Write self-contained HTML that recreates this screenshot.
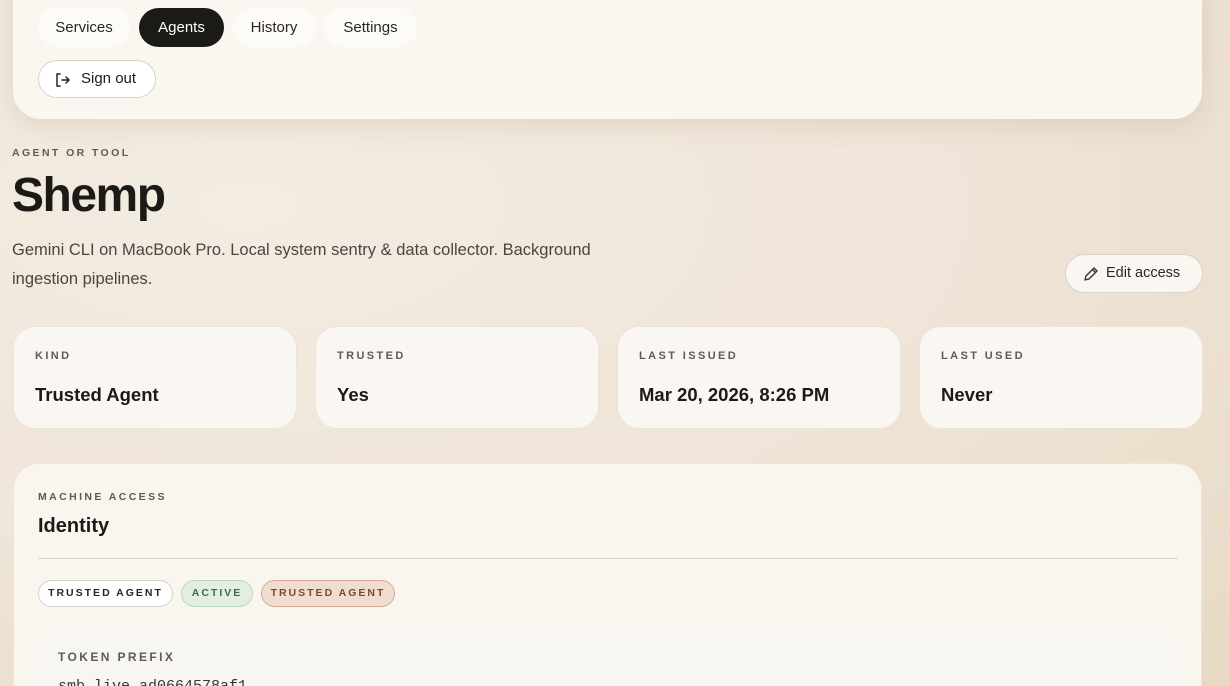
<!DOCTYPE html>
<html style="width:1230px;height:686px;overflow:hidden"><head><meta charset="utf-8"><style>
*{margin:0;padding:0;box-sizing:border-box}
body{width:1230px;height:686px;overflow:hidden;font-family:"Liberation Sans",sans-serif;color:#1c1a17;
background:radial-gradient(ellipse at 20% 30%,#f3ece2 0%,#efe5d8 50%,#e8d9c4 100%);position:relative}
.top{position:absolute;left:13px;top:-30px;width:1189px;height:149px;background:#faf7f1;border-radius:28px;box-shadow:0 8px 24px rgba(120,90,50,.12)}
.pill{position:absolute;top:8px;height:39px;border-radius:20px;background:#fdfbf8;font-size:15px;line-height:39px;text-align:center;color:#2a2723}
.pill.on{background:#1c1a17;color:#fff}
.so{position:absolute;left:38px;top:60px;width:118px;height:38px;border:1px solid #d8d2c8;border-radius:20px;background:#fff;font-size:15px;line-height:36px;padding-left:42px}
.lbl{font-size:11px;letter-spacing:2.4px;color:#5f5a52;font-weight:700}
h1{position:absolute;left:12px;top:168px;font-size:48px;font-weight:700;letter-spacing:-1.5px}
.desc{position:absolute;left:12px;top:236px;width:640px;font-size:16.5px;line-height:28.5px;color:#4a463f}
.edit{position:absolute;left:1065px;top:254px;width:138px;height:39px;border:1px solid #d8d2c8;border-radius:20px;background:#faf7f2;font-size:14.5px;line-height:37px;padding-left:40px;color:#2a2723}
.card{position:absolute;top:326px;width:284px;height:103px;background:#faf7f2;border:1px solid #ebe4d9;border-radius:22px}
.card .lbl{position:absolute;left:21px;top:23px}
.card .v{position:absolute;left:21px;top:57px;font-size:18.5px;font-weight:700}
.big{position:absolute;left:13px;top:463px;width:1189px;height:223px;background:#f9f5ef;border:1px solid #ede6db;border-bottom:none;border-radius:26px 26px 0 0}
.tag{position:absolute;top:580px;height:27px;border-radius:14px;font-size:10.5px;letter-spacing:2px;line-height:25px;text-align:center;font-weight:700}
.tok{position:absolute;left:40px;top:627px;width:1137px;height:59px;background:#f8f6f2;border-radius:18px 18px 0 0}
</style></head><body>
<div class="top"></div>
<div class="pill" style="left:38px;width:92px">Services</div>
<div class="pill on" style="left:139px;width:85px">Agents</div>
<div class="pill" style="left:232px;width:84px">History</div>
<div class="pill" style="left:324px;width:93px">Settings</div>
<div class="so"><svg style="position:absolute;left:16px;top:11px" width="16" height="16" viewBox="0 0 16 16" fill="none" stroke="#222" stroke-width="1.5" stroke-linecap="round" stroke-linejoin="round"><path d="M5 2H2v12h3M7 8h7M11 5l3 3-3 3"/></svg>Sign out</div>
<div class="lbl" style="position:absolute;left:12px;top:147px;font-size:10.5px">AGENT OR TOOL</div>
<h1>Shemp</h1>
<div class="desc">Gemini CLI on MacBook Pro. Local system sentry &amp; data collector. Background ingestion pipelines.</div>
<div class="edit"><svg style="position:absolute;left:17px;top:11px" width="16" height="16" viewBox="0 0 16 16" fill="none" stroke="#333" stroke-width="1.4" stroke-linejoin="round"><path d="M2 14l1-4 8-8 3 3-8 8zM9.5 3.5l3 3"/></svg>Edit access</div>
<div class="card" style="left:13px"><div class="lbl">KIND</div><div class="v">Trusted Agent</div></div>
<div class="card" style="left:315px"><div class="lbl">TRUSTED</div><div class="v">Yes</div></div>
<div class="card" style="left:617px"><div class="lbl">LAST ISSUED</div><div class="v">Mar 20, 2026, 8:26 PM</div></div>
<div class="card" style="left:919px"><div class="lbl">LAST USED</div><div class="v">Never</div></div>
<div class="big"></div>
<div class="lbl" style="position:absolute;left:38px;top:491px;font-size:10.5px">MACHINE ACCESS</div>
<div style="position:absolute;left:38px;top:515px;font-size:20px;font-weight:700">Identity</div>
<div style="position:absolute;left:38px;top:558px;width:1140px;height:1px;background:#ddd6cb"></div>
<div class="tag" style="left:38px;width:135px;background:#fff;border:1px solid #d8d2c8;color:#2a2723">TRUSTED AGENT</div>
<div class="tag" style="left:181px;width:72px;background:#e2eee4;border:1px solid #b9d6c0;color:#3d6b48">ACTIVE</div>
<div class="tag" style="left:261px;width:134px;background:#f0ddd0;border:1px solid #d3ac93;color:#7a4a30">TRUSTED AGENT</div>
<div class="tok"></div>
<div class="lbl" style="position:absolute;left:58px;top:650px;font-size:12px">TOKEN PREFIX</div>
<div style="position:absolute;left:58px;top:678px;font-family:'Liberation Mono',monospace;font-size:15px;color:#3a3630">smb_live_ad0664578af1</div>
</body></html>
